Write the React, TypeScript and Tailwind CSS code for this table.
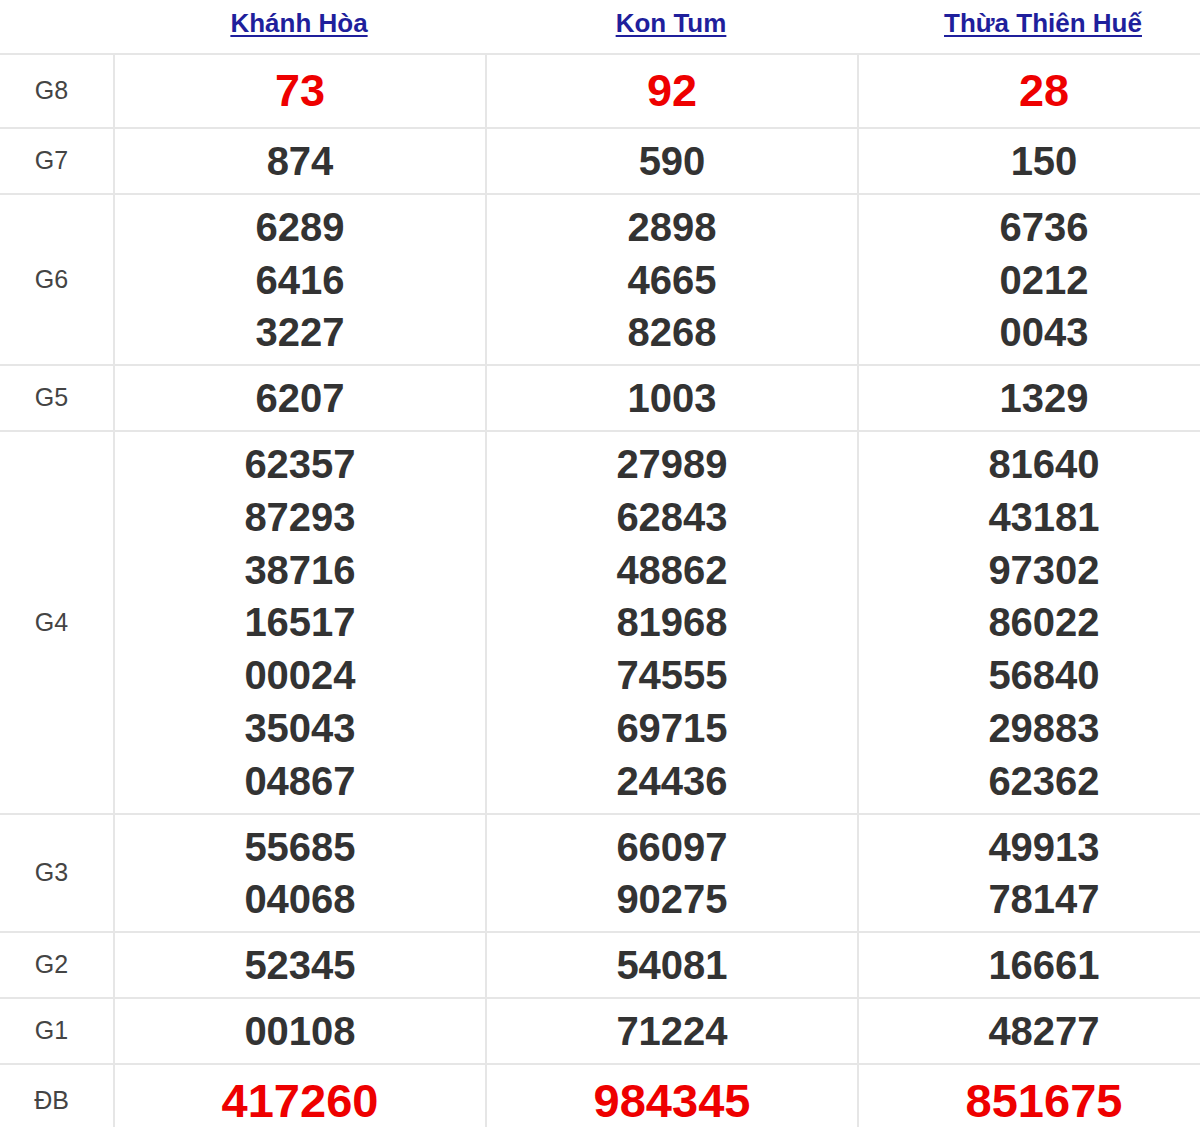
import React from "react";

const provinces = ["Khánh Hòa", "Kon Tum", "Thừa Thiên Huế"];

type Row = { label: string; values: string[][]; kind: "g8" | "db" | "n" };

const rows: Row[] = [
  { label: "G8", kind: "g8", values: [["73"], ["92"], ["28"]] },
  { label: "G7", kind: "n", values: [["874"], ["590"], ["150"]] },
  {
    label: "G6",
    kind: "n",
    values: [
      ["6289", "6416", "3227"],
      ["2898", "4665", "8268"],
      ["6736", "0212", "0043"],
    ],
  },
  { label: "G5", kind: "n", values: [["6207"], ["1003"], ["1329"]] },
  {
    label: "G4",
    kind: "n",
    values: [
      ["62357", "87293", "38716", "16517", "00024", "35043", "04867"],
      ["27989", "62843", "48862", "81968", "74555", "69715", "24436"],
      ["81640", "43181", "97302", "86022", "56840", "29883", "62362"],
    ],
  },
  {
    label: "G3",
    kind: "n",
    values: [
      ["55685", "04068"],
      ["66097", "90275"],
      ["49913", "78147"],
    ],
  },
  { label: "G2", kind: "n", values: [["52345"], ["54081"], ["16661"]] },
  { label: "G1", kind: "n", values: [["00108"], ["71224"], ["48277"]] },
  { label: "ĐB", kind: "db", values: [["417260"], ["984345"], ["851675"]] },
];

function numClass(kind: Row["kind"]) {
  if (kind === "g8") return "text-[45px] leading-[59px] text-[#ee0000]";
  if (kind === "db") return "text-[47px] leading-[59px] text-[#ee0000]";
  return "text-[40px] leading-[52.8px] text-[#333333]";
}

function cellClass(kind: Row["kind"]) {
  if (kind === "n")
    return "border-l-2 border-[#e6e6e6] pt-[6px] pb-[5px] flex flex-col items-center font-bold";
  if (kind === "g8")
    return "border-l-2 border-[#e6e6e6] pt-[6px] pb-[7px] flex flex-col items-center font-bold";
  return "border-l-2 border-[#e6e6e6] py-[6px] flex flex-col items-center font-bold";
}

export default function App() {
  return (
    <div
      className="w-[1200px] overflow-hidden bg-white"
      style={{ fontFamily: '"Liberation Sans", Arial, sans-serif' }}
    >
      <div className="w-[1229px]">
        <div className="grid grid-cols-[113px_372px_372px_372px] border-b-2 border-[#e6e6e6]">
          <div />
          {provinces.map((p) => (
            <div key={p} className="h-[53px] flex items-start justify-center pt-[6px]">
              <a
                href="#"
                className="text-[26px] leading-[34px] font-bold text-[#1f1f9c] underline underline-offset-[3px] decoration-[2px]"
              >
                {p}
              </a>
            </div>
          ))}
        </div>
        {rows.map((r) => (
          <div
            key={r.label}
            className="grid grid-cols-[113px_372px_372px_372px] border-b-2 border-[#e6e6e6]"
          >
            <div className="flex items-center justify-center pr-[10px] text-[25px] text-[#444444]">
              {r.label}
            </div>
            {r.values.map((col, i) => (
              <div key={i} className={cellClass(r.kind)}>
                {col.map((v, j) => (
                  <div key={j} className={numClass(r.kind)}>
                    {v}
                  </div>
                ))}
              </div>
            ))}
          </div>
        ))}
      </div>
    </div>
  );
}
